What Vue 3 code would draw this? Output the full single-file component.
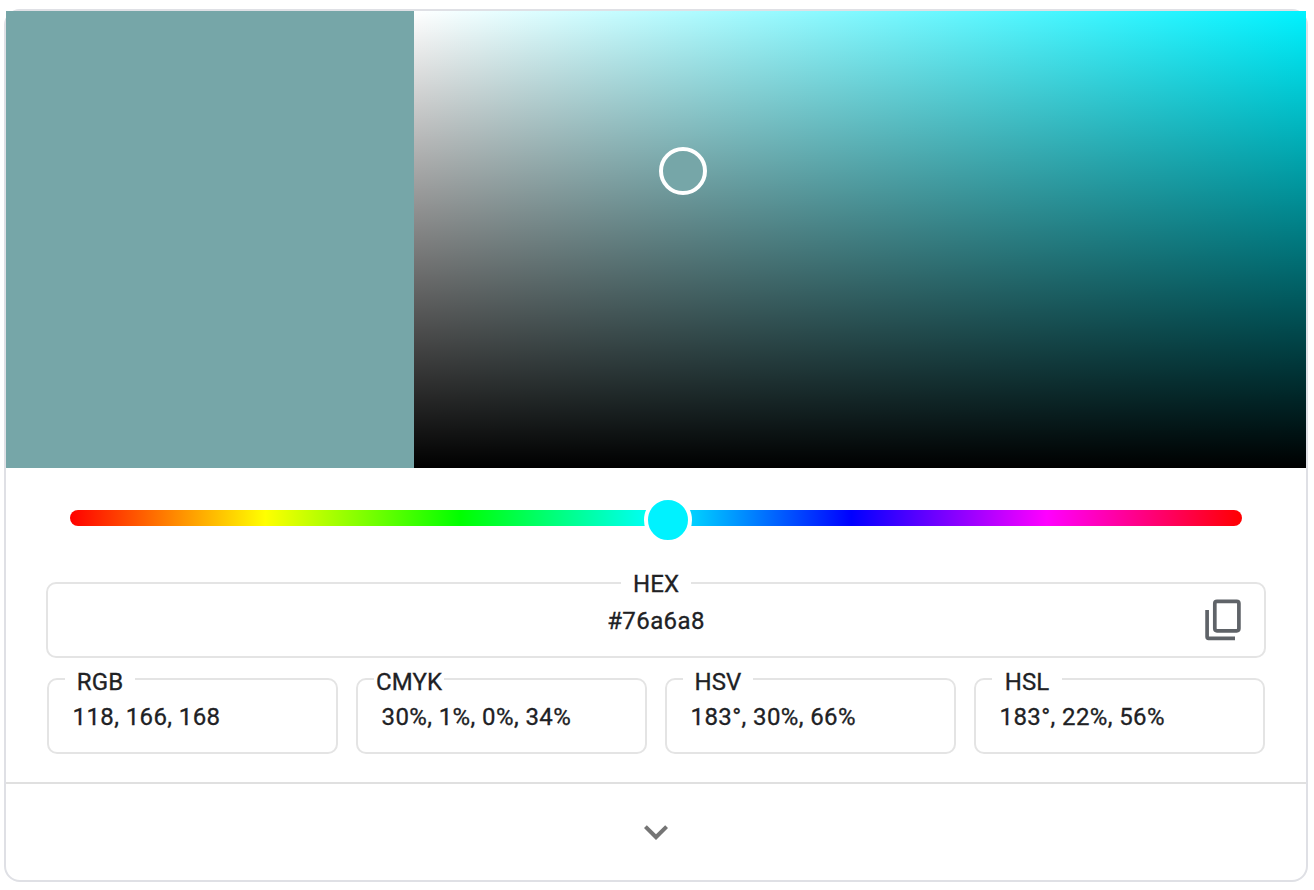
<script setup>
import { ref } from 'vue'

const hex = ref('#76a6a8')
const fields = [
  { label: 'RGB', value: '118, 166, 168' },
  { label: 'CMYK', value: '30%, 1%, 0%, 34%' },
  { label: 'HSV', value: '183°, 30%, 66%' },
  { label: 'HSL', value: '183°, 22%, 56%' }
]
</script>

<template>
  <main class="card">
    <section class="top">
      <div class="preview"></div>
      <div class="spectrum"><span class="picker"></span></div>
    </section>
    <section class="hue">
      <div class="track"><span class="thumb"></span></div>
    </section>
    <section class="values">
      <div class="field hex">
        <span class="label">HEX</span>
        <span class="value">{{ hex }}</span>
        <button class="copy" aria-label="Copy">
          <svg width="40" height="44" viewBox="0 0 40 44" fill="none" stroke="#5f6368" stroke-width="3.7">
            <rect x="11.8" y="3.3" width="24.1" height="29.5" rx="2.2" />
            <path d="M4.1 12V38.8Q4.1 40.3 5.6 40.3H32" />
          </svg>
        </button>
      </div>
      <div class="row">
        <div v-for="f in fields" :key="f.label" class="field">
          <span class="label">{{ f.label }}</span>
          <span class="value">{{ f.value }}</span>
        </div>
      </div>
    </section>
    <footer class="more">
      <svg width="48" height="48" viewBox="0 0 24 24">
        <path d="M16.59 8.59L12 13.17 7.41 8.59 6 10l6 6 6-6z" fill="#757575" />
      </svg>
    </footer>
  </main>
</template>

<style>
body {
  background: #fff;
}
</style>

<style scoped>
.card {
  box-sizing: border-box;
  width: 1304px;
  height: 873px;
  margin: 9px 0 0 4px;
  border: 2px solid #dfe0e5;
  border-radius: 16px;
  background: #fff;
  color: #202124;
  font: 400 24px/28px Roboto, sans-serif;
  letter-spacing: 0.4px;
  -webkit-text-stroke: 0.3px #202124;
}
.top {
  display: flex;
  height: 457px;
}
.preview {
  width: 408px;
  background: #76a6a8;
}
.spectrum {
  position: relative;
  flex: 1;
  background:
    linear-gradient(to top, #000, rgba(0, 0, 0, 0)),
    linear-gradient(to right, #fff, #00f2ff);
}
.picker {
  position: absolute;
  left: 245px;
  top: 136px;
  box-sizing: border-box;
  width: 48px;
  height: 48px;
  border: 4px solid #fff;
  border-radius: 50%;
  background: #76a6a8;
}
.hue {
  box-sizing: border-box;
  height: 114px;
  padding: 42px 64px 0;
}
.track {
  position: relative;
  height: 16px;
  border-radius: 8px;
  background: linear-gradient(to right, #f00, #ff0, #0f0, #0ff, #00f, #f0f, #f00);
}
.thumb {
  position: absolute;
  left: 574px;
  top: -14px;
  box-sizing: border-box;
  width: 48px;
  height: 48px;
  border: 4px solid #fff;
  border-radius: 50%;
  background: #00f2ff;
}
.values {
  box-sizing: border-box;
  height: 200px;
  padding: 0 40px;
}
.field {
  position: relative;
  box-sizing: border-box;
  height: 76px;
  border: 2px solid #e4e4e4;
  border-radius: 10px;
  padding: 23px 0 0 23.5px;
}
.label {
  position: absolute;
  left: 16px;
  top: -12px;
  width: 70px;
  background: #fff;
  letter-spacing: 0.1px;
  text-align: center;
}
.value {
  display: block;
  white-space: nowrap;
}
.row {
  display: grid;
  grid-template-columns: repeat(4, 291px);
  gap: 18px;
  margin: 20px 0 0 1px;
}
.hex {
  padding: 23px 0 0;
  text-align: center;
}
.hex .label {
  left: 573px;
  top: -14px;
}
.copy {
  position: absolute;
  right: 21px;
  top: 14px;
  width: 40px;
  height: 44px;
  padding: 0;
  border: 0;
  background: none;
}
.copy svg,
.more svg {
  display: block;
}
.more {
  display: flex;
  justify-content: center;
  padding-top: 24px;
  border-top: 2px solid #e0e0e0;
}
</style>
